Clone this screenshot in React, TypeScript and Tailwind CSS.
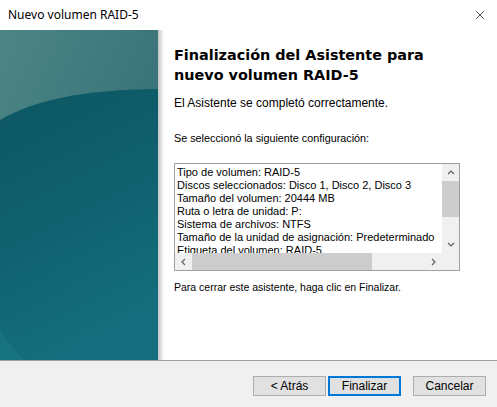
import { X } from "lucide-react";

const config = [
  "Tipo de volumen: RAID-5",
  "Discos seleccionados: Disco 1, Disco 2, Disco 3",
  "Tamaño del volumen: 20444 MB",
  "Ruta o letra de unidad: P:",
  "Sistema de archivos: NTFS",
  "Tamaño de la unidad de asignación: Predeterminado",
  "Etiqueta del volumen: RAID-5",
  "Formato rápido: Sí",
];

const SideArt = () => (
  <svg className="block h-full w-full" viewBox="0 0 158 330" preserveAspectRatio="none">
    <defs>
      <linearGradient id="top" x1="0" y1="0" x2="1" y2="1">
        <stop offset="0" stopColor="#4d8585" />
        <stop offset="1" stopColor="#2b6870" />
      </linearGradient>
      <linearGradient id="body" x1="0" y1="0" x2="0.3" y2="1">
        <stop offset="0" stopColor="#0c5662" />
        <stop offset="0.5" stopColor="#10606e" />
        <stop offset="1" stopColor="#146e7d" />
      </linearGradient>
    </defs>
    <rect width="158" height="330" fill="url(#top)" />
    <path d="M0 90 C 35 70, 80 60, 158 59 L158 330 L0 330 Z" fill="url(#body)" />
    <path d="M0 300 C 8 312, 16 322, 24 330 L0 330 Z" fill="#1a7f88" opacity="0.45" />
  </svg>
);

const Arrow = ({ dir }: { dir: "up" | "down" | "left" | "right" }) => {
  const d = {
    up: "M1 5 L4 2 L7 5",
    down: "M1 2 L4 5 L7 2",
    left: "M5 1 L2 4 L5 7",
    right: "M2 1 L5 4 L2 7",
  }[dir];
  return (
    <svg width="8" height="8" viewBox="0 0 8 8">
      <path d={d} fill="none" stroke="#606060" strokeWidth="1.2" />
    </svg>
  );
};

export default function App() {
  return (
    <div
      className="flex h-[407px] w-[497px] flex-col bg-white text-black"
      style={{ fontFamily: '"Liberation Sans", Arial, sans-serif' }}
    >
      <div className="flex h-[30px] shrink-0 items-center justify-between pl-2 pr-[10px]">
        <span className="text-[12px]" style={{ fontFamily: '"Noto Sans", "Open Sans", sans-serif' }}>
          Nuevo volumen RAID-5
        </span>
        <X className="h-[14px] w-[14px]" strokeWidth={1.2} />
      </div>

      <div className="flex h-[330px] shrink-0">
        <div className="w-[158px] shrink-0">
          <SideArt />
        </div>
        <div className="w-[6px] shrink-0 bg-gradient-to-r from-[#c4c4c4] to-white" />

        <div className="flex flex-1 flex-col pl-[10px] pt-[15px]">
          <h1
            className="text-[14.4px] font-bold leading-[20px] text-black"
            style={{ fontFamily: '"DejaVu Sans", Verdana, sans-serif' }}
          >
            Finalización del Asistente para
            <br />
            nuevo volumen RAID-5
          </h1>
          <p className="mt-[11px] text-[12px] leading-[14px]">El Asistente se completó correctamente.</p>
          <p className="mt-[21px] text-[10.8px] leading-[14px]">Se seleccionó la siguiente configuración:</p>

          <div className="mt-[18px] flex h-[108px] w-[286px] flex-col border border-[#a0a0a0]">
            <div className="flex min-h-0 flex-1">
              <div className="flex-1 overflow-hidden whitespace-nowrap pl-[2px] pt-[2px] text-[11px] leading-[13px]">
                {config.map((line) => (
                  <div key={line}>{line}</div>
                ))}
              </div>
              <div className="flex w-[17px] shrink-0 flex-col bg-[#f0f0f0]">
                <div className="flex h-[17px] items-center justify-center">
                  <Arrow dir="up" />
                </div>
                <div className="flex-1">
                  <div className="h-[36px] bg-[#cdcdcd]" />
                </div>
                <div className="flex h-[17px] items-center justify-center">
                  <Arrow dir="down" />
                </div>
              </div>
            </div>
            <div className="flex h-[17px] shrink-0 bg-[#f0f0f0]">
              <div className="flex w-[17px] items-center justify-center">
                <Arrow dir="left" />
              </div>
              <div className="flex flex-1 items-stretch">
                <div className="w-[180px] bg-[#cdcdcd]" />
              </div>
              <div className="flex w-[17px] items-center justify-center">
                <Arrow dir="right" />
              </div>
              <div className="w-[17px]" />
            </div>
          </div>

          <p className="mt-[9px] text-[10.5px] leading-[14px]">
            Para cerrar este asistente, haga clic en Finalizar.
          </p>
        </div>
      </div>

      <div className="h-px shrink-0 bg-[#a0a0a0]" />
      <div className="flex flex-1 items-start justify-end bg-[#f0f0f0] pr-[11px] pt-[15px] text-[12px]">
        <button className="h-[20px] w-[73px] border border-[#adadad] bg-[#e1e1e1] leading-none">
          &lt; Atrás
        </button>
        <button className="ml-[2px] h-[20px] w-[73px] border-2 border-[#0078d7] bg-[#e1e1e1] leading-none">
          Finalizar
        </button>
        <button className="ml-[12px] h-[20px] w-[73px] border border-[#adadad] bg-[#e1e1e1] leading-none">
          Cancelar
        </button>
      </div>
    </div>
  );
}
